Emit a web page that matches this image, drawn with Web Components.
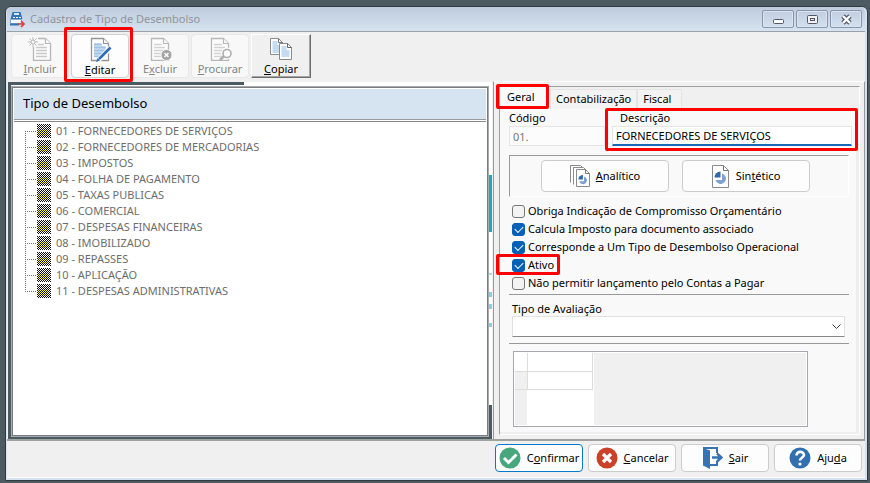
<!DOCTYPE html>
<html lang="pt-BR">
<head>
<meta charset="utf-8">
<title>Cadastro de Tipo de Desembolso</title>
<style>
html { height: 100%; }
body { margin: 0; min-height: 100%; box-sizing: border-box; padding: 6px 2px 4px 5px; display: flex; background: #4b5b61; font: 11px/16px "Noto Sans", "Open Sans", sans-serif; color: #000; }
</style>
</head>
<body>
<app-window></app-window>
<script>
const doc = (extra, fold = '#fff') => `<path d="M3.5 1.5h12l5 5v17h-17z" fill="#fff" stroke="#959595" stroke-width="1.3"/><path d="M15.5 1.5v5h5" fill="${fold}" stroke="#959595" stroke-width="1.2"/>${extra}`;
const lines = c => `<path d="M6 7.5h8M6 10.5h11M6 13.5h11M6 16.5h11M6 19.5h11" stroke="${c}" stroke-width="1.6"/>`;
const svg = (w, h, body, vb) => `<svg width="${w}" height="${h}" viewBox="${vb || `0 0 ${w} ${h}`}" fill="none" aria-hidden="true">${body}</svg>`;
const pie = `<path d="M10.500 6.500v6h-6a6 6 0 0 1 6-6z" fill="#2f69a8"/><path d="M12 8.500a5.300 5.300 0 1 1-6.500 6.500H12z" fill="#7ea1cf"/>`;
const ICONS = {
  app: svg(17, 17, `<path d="M3.500 1h8l2 7h-12z" fill="#3374b5"/><path d="M5 2h5v2H5z" fill="#d6e7f5"/><path d="M4 6h2v1H4zm3 0h2v1H7zm3 0h2v1h-2z" fill="#fff"/><path d="M1.500 8.500h11v4h-11z" fill="#f5fafc" stroke="#7ea9d0"/><path d="M1 13.500h9" stroke="#3374b5" stroke-width="2"/><path d="M9 13h6m-3-3 3 3-3 3" stroke="#d9443a" stroke-width="1.700"/>`),
  incluir: svg(24, 24, `<g transform="translate(2 0)">${doc(lines('#b0b0b0'))}</g><path d="M0 0h10v10H0z" fill="#f8f8f8"/><path d="M5 0v10M0 5h10M1.500 1.500l7 7M8.500 1.500l-7 7" stroke="#999"/><circle cx="5" cy="5" r="2" fill="#fff" stroke="#999"/>`),
  editar: svg(24, 25, `${doc('<path d="M6 6h7v3h5v11H6z" fill="#c7ddf3"/>' + lines('#9fc1e5'))}<path d="M9.500 24 23 10.500" stroke="#fff" stroke-width="5"/><path d="M11 22 22.500 10.500" stroke="#2e6db5" stroke-width="2.600"/><path d="m8 25 1.500-4 2.500 2.500z" fill="#2e6db5"/>`),
  excluir: svg(24, 24, `${doc(lines('#c0c0c0'))}<circle cx="18.500" cy="18" r="5.500" fill="#777" stroke="#f9f9f9"/><path d="m16.500 16 4 4m0-4-4 4" stroke="#fff" stroke-width="1.600"/>`),
  procurar: svg(24, 24, `${doc(lines('#c0c0c0'))}<circle cx="19" cy="16.500" r="4" fill="#fff" stroke="#f9f9f9" stroke-width="4"/><circle cx="19" cy="16.500" r="4" fill="#fff" stroke="#888" stroke-width="1.600"/><path d="m16 19-4 4" stroke="#888" stroke-width="2.500"/>`),
  copiar: svg(22, 24, `<path d="M.5 1.500h8l4 4v12H.5z" fill="#fff" stroke="#8b8b8b"/><path d="M2.500 4h5v4h3v8h-8z" fill="#c4dbf1"/><path d="M8.500 1.500v4h4" stroke="#777"/><path d="M9.500 6.500h8l4 4v12h-12z" fill="#fff" stroke="#8b8b8b"/><path d="M11.500 9h5v4h3v7h-8z" fill="#c4dbf1"/><path d="M17.500 6.500v4h4" stroke="#666"/>`),
  analitico: svg(20, 22, `<path d="M.5 17.500V.5h10l2 2M3.500 19.500v-17h10l2 2" fill="#fff" stroke="#8b8b8b"/><path d="M6.500 4.500h9l4 4v13h-13z" fill="#fff" stroke="#8b8b8b"/><path d="M15.500 4.500v4h4" stroke="#777"/><g transform="translate(5 5) scale(.75)">${pie}</g>`),
  sintetico: svg(18, 23, `<path d="M.5.5h11l5 5v17H.5z" fill="#fff" stroke="#8b8b8b"/><path d="M11.500.5v5h5" stroke="#777"/><g transform="translate(-2 0)">${pie}</g>`),
  confirmar: svg(22, 22, `<circle cx="11" cy="11" r="10.500" fill="#45a77b"/><path d="m5 11 4.500 4.500 8-8" stroke="#fff" stroke-width="3"/>`),
  cancelar: svg(22, 22, `<circle cx="11" cy="11" r="10.500" fill="#ca4028"/><path d="m7 7 8 8m0-8-8 8" stroke="#fff" stroke-width="3.200"/>`),
  sair: svg(21, 22, `<path d="M1 1h14v5M15 14v4H8" stroke="#3873b3" stroke-width="2"/><path d="m1 1 7 2.500V22l-7-3.500z" fill="#3873b3"/><path d="M10 10.500h9M15 6.500l4.500 4-4.500 4" stroke="#3873b3" stroke-width="2.400"/>`),
  ajuda: svg(22, 22, `<circle cx="11" cy="11" r="10.500" fill="#326fb0"/><path d="M7.500 8.500c0-5 7.500-4.500 7.500-.5 0 2.500-4 2.500-4 5.500" stroke="#fff" stroke-width="2.600"/><circle cx="11" cy="17" r="1.600" fill="#fff"/>`),
  min: svg(13, 13, `<rect x="1.500" y="6.500" width="10" height="4" rx="1" fill="#fff" stroke="#54576a"/>`),
  max: svg(13, 13, `<rect x="1.500" y="2.500" width="10" height="8" rx="1" fill="#f2f2f2" stroke="#54576a"/><rect x="4.500" y="5.500" width="4" height="2" fill="#dce6f1" stroke="#54576a"/>`),
  close: svg(13, 13, `<path d="m3 3 7 7m0-7-7 7" stroke="#54576a" stroke-width="4.600"/><path d="m3 3 7 7m0-7-7 7" stroke="#fff" stroke-width="2.400"/>`)
};
const define = (name, css, html) => customElements.define(name, class extends HTMLElement {
  constructor() {
    super();
    const markup = typeof html === 'function' ? html(this) : html;
    this.attachShadow({ mode: 'open' }).innerHTML = `<style>*{box-sizing:border-box}button,input,select{font:inherit;color:inherit;margin:0}svg{display:block;flex:none}${css}</style>${markup}`;
  }
});

/* Red outline drawn over the element that contains it */
define('focus-frame', `:host{position:absolute;inset:var(--frame,-6px);border:3px solid #f00;border-radius:2px;pointer-events:none;z-index:3}`, '');

define('title-bar', `
:host{display:flex;align-items:center;height:25px;padding:0 3px 0 2px;gap:4px;background:linear-gradient(#bdcbdc,#d6e3f0);border-bottom:1px solid #9aa0a8;border-radius:5px 5px 0 0}
h1{flex:1;margin:0;font-size:11px;line-height:18px;font-weight:400;color:#8f959c}
.c{display:flex;gap:2px}
button{display:flex;align-items:center;justify-content:center;width:32px;height:18px;padding:0;background:linear-gradient(#c0cee0,#d3e0ee);border:1px solid #8995a9;border-radius:2px;box-shadow:inset 0 0 0 1px #d9e4f0}`,
`${ICONS.app}<h1><slot></slot></h1><div class="c"><button aria-label="Minimizar">${ICONS.min}</button><button aria-label="Maximizar">${ICONS.max}</button><button aria-label="Fechar">${ICONS.close}</button></div>`);

define('tool-button', `
:host{display:block;position:relative;width:58px}
:host([classic]){width:60px}
button{display:flex;flex-direction:column;align-items:center;justify-content:space-between;width:100%;height:44px;padding:2px 0 0;background:#fdfdfd;border:1px solid #d0d0d0;border-radius:4px}
button:disabled{background:#f8f8f8;border-color:#e8e8e8;color:#848484}
button:disabled svg{opacity:.65}
:host([classic]) button{background:#f0f0f0;border:1px solid;border-color:#fff #6d6d6d #6d6d6d #fff;border-radius:0;box-shadow:inset -1px -1px #a5a5a5}`,
el => `<button ${el.hasAttribute('disabled') ? 'disabled' : ''}>${ICONS[el.getAttribute('icon')]}<span><slot></slot></span></button><slot name="frame"></slot>`);

define('tool-bar', `:host{display:flex;gap:2px;padding:2px 4px;height:49px;background:#f0f0f0}`, `<slot></slot>`);

define('tree-item', `
:host{display:flex;align-items:center;height:16px;color:#6d6d6d;
 background:repeating-linear-gradient(90deg,#777 0 1px,transparent 1px 2px) 0 8px/11px 1px no-repeat,repeating-linear-gradient(#777 0 1px,transparent 1px 2px) 0 0/1px 16px no-repeat}
:host(:first-of-type){background-position:0 8px,0 8px}
:host(:last-of-type){background-size:11px 1px,1px 8px}
i{width:14px;height:14px;margin:0 5px 0 12px;background:conic-gradient(transparent 25%,#111 0 50%,transparent 0 75%,#111 0) 0 0/2px 2px,linear-gradient(#ff0,#ff0) 1px 5px/10px 7px no-repeat,#fff}`,
`<i></i><slot></slot>`);

define('tree-panel', `
:host{display:flex;flex-direction:column;border:1px solid #777b82;box-shadow:0 0 0 1px #aaa;background:#fff;min-width:0}
h2{margin:1px 1px 3px;padding:5px 9px 7px;font-size:13px;line-height:18px;font-weight:400;background:#d6e4f2;box-shadow:0 1px #999,0 2px #fff,0 3px #888}
.l{padding:1px 12px}`,
`<h2>Tipo de Desembolso</h2><div class="l" role="tree"><slot></slot></div>`);

define('check-line', `
:host{display:block;position:relative;width:max-content}
label{display:flex;align-items:center;gap:3px;height:18px}
input{appearance:none;width:13px;height:13px;border:1px solid #777;border-radius:3px;background:#f3f3f3}
input:checked{border-color:#0561b8;background:#0561b8}
input:checked::after{content:"";display:block;width:7px;height:4px;margin:2px;border:solid #fff;border-width:0 0 1px 1px;transform:rotate(-45deg)}`,
el => `<label><input type="checkbox" ${el.hasAttribute('checked') ? 'checked' : ''}><slot></slot></label><slot name="frame"></slot>`);

define('icon-button', `
:host{display:block;width:var(--w,88px)}
button{display:flex;align-items:center;justify-content:center;gap:var(--gap,6px);width:100%;height:var(--h,28px);padding:0 3px;background:#fdfdfd;border:1px solid #ccc;border-radius:4px}
:host([primary]) button{border-color:#0878ce}`,
el => `<button>${ICONS[el.getAttribute('icon')]}<span><slot></slot></span></button>`);

define('detail-form', `
:host{display:flex;flex-direction:column;margin:4px 4px 4px 5px;border:1px solid #a0a0a0;border-right-color:#fff;border-bottom-color:#fff;background:#f9f9f9;box-shadow:inset -3px -2px #eee}
nav{display:flex;align-items:flex-end;height:22px;background:linear-gradient(#f0f0f0,#f0f0f0) 50px 0/100% 100% no-repeat}
nav button{position:relative;height:20px;padding:0 10px 2px 5px;border:1px solid #e4e4e4;border-bottom:0;background:#f3f3f3;white-space:nowrap}
nav .wide{padding-right:5px}
nav button.on{height:22px;width:48px;margin-right:2px;padding:0 7px 3px;background:#f9f9f9;border:0;text-align:left}
.body{padding:1px 10px 7px 9px}
.fields{display:grid;grid-template-columns:96px 1fr;column-gap:7px;margin-right:-3px}
.f{position:relative}
label{display:block;line-height:15px}
.f+.f label{padding-left:8px}
.f input{display:block;width:100%;height:20px;padding:0 3px;margin-top:1px;border:1px solid #e5e5e5;background:#fff;outline:0}
.f input:disabled{background:#fcfcfc;color:#777}
.f .edit{border-bottom:2px solid #1769b8}
.kind{display:flex;gap:13px;margin:9px 0 5px;padding:4px 8px 4px 31px;height:42px;border:1px solid #999;border-right-color:#fff;border-bottom-color:#fff;--w:128px;--h:32px}
.checks{padding:0 0 0 3px}
.rate{margin-top:2px;padding:6px 4px 6px 3px;border:solid #999;border-width:1px 0}
select{appearance:none;display:block;width:100%;height:21px;border:1px solid #e2e2e2;border-bottom-color:#888;border-radius:1px;background:#fff}
.s{position:relative}
.s svg{position:absolute;right:4px;top:8px;pointer-events:none}
.grid{display:flex;width:295px;height:76px;margin:7px 0 0 4px;padding:1px;border:1px solid #a5a8ad;background:#fff;max-width:100%}
table{border-collapse:collapse;height:36px}
td,th{height:18px;padding:0;border:1px solid #ddd;border-width:0 1px 1px 0}
td:first-child,th:first-child{width:13px}
td:last-child,th:last-child{width:65px}
tbody td:first-child{background:#f0f0f0}
.t{width:78px;margin-right:1px;background:linear-gradient(#f0f0f0,#f0f0f0) 0 36px/12px 100% no-repeat}
.rest{flex:1;background:#f0f0f0}`,
`<nav role="tablist"><button class="on" role="tab" aria-selected="true">Geral<focus-frame style="--frame:-3px -1px 0 -4px"></focus-frame></button><button class="wide" role="tab">Contabilização</button><button role="tab">Fiscal</button></nav>
<div class="body"><div class="fields"><div class="f"><label for="cod">Código</label><input id="cod" value="01." disabled></div><div class="f"><label for="desc">Descrição</label><input id="desc" class="edit" value="FORNECEDORES DE SERVIÇOS"><focus-frame style="--frame:-2px -6px -5px -7px"></focus-frame></div></div>
<div class="kind"><icon-button icon="analitico"><u>A</u>nalítico</icon-button><icon-button icon="sintetico">Sin<u>t</u>ético</icon-button></div>
<div class="checks"><check-line>Obriga Indicação de Compromisso Orçamentário</check-line><check-line checked>Calcula Imposto para documento associado</check-line><check-line checked>Corresponde a Um Tipo de Desembolso Operacional</check-line><check-line checked>Ativo<focus-frame slot="frame" style="--frame:-2px -6px -1px -16px"></focus-frame></check-line><check-line>Não permitir lançamento pelo Contas a Pagar</check-line></div>
<div class="rate"><label for="rate">Tipo de Avaliação</label><div class="s"><select id="rate"><option></option></select>${svg(9, 6, '<path d="m.5.5 4 4 4-4" stroke="#444"/>')}</div></div>
<div class="grid"><div class="t"><table aria-label="Avaliação"><thead><tr><th></th><th></th></tr></thead><tbody><tr><td></td><td></td></tr></tbody></table></div><div class="rest"></div></div></div>`);

const items = ['01 - FORNECEDORES DE SERVIÇOS', '02 - FORNECEDORES DE MERCADORIAS', '03 - IMPOSTOS', '04 - FOLHA DE PAGAMENTO', '05 - TAXAS PUBLICAS', '06 - COMERCIAL', '07 - DESPESAS FINANCEIRAS', '08 - IMOBILIZADO', '09 - REPASSES', '10 - APLICAÇÃO', '11 - DESPESAS ADMINISTRATIVAS'];

define('app-window', `
:host{flex:1;min-width:0;display:flex;flex-direction:column;border:1px solid #35383d;border-radius:6px 6px 0 0;background:#d6e2f0;padding:0 2px 2px 1px}
main{flex:1;display:grid;grid-template-columns:minmax(0,1fr) 372px;border-bottom:2px solid #9fa3a0;background:#f0f0f0}
.left{display:grid;margin:1px 1px 0 1px;padding:5px 4px 3px 4px;
 background:
 linear-gradient(#4b5b61,#4b5b61) 0 0/236px 3px no-repeat,
 linear-gradient(#4b5b61,#4b5b61) 0 0/3px 100% no-repeat,
 linear-gradient(#4b5b61,#4b5b61) 0 100%/100% 2px no-repeat,
 linear-gradient(#4b5b61,#4b5b61) 100% 100%/3px 34px no-repeat,
 linear-gradient(#19a9c0,#19a9c0) 100% 93px/3px 57px no-repeat,
 linear-gradient(#a5dce5,#a5dce5) 100% 191px/3px 2px no-repeat,
 linear-gradient(#8acfda,#8acfda) 100% 210px/3px 5px no-repeat,
 linear-gradient(#8acfda,#8acfda) 100% 222px/3px 5px no-repeat,
 linear-gradient(#8acfda,#8acfda) 100% 241px/3px 4px no-repeat,#fff}
.right{display:grid;border-left:1px solid #999;border-right:1px solid #999;border-top:1px solid #fff}
footer{display:flex;justify-content:flex-end;gap:5px;padding:3px 3px 5px;background:#f0f0f0;border-bottom:1px solid #fff}`,
`<title-bar>Cadastro de Tipo de Desembolso</title-bar>
<tool-bar><tool-button icon="incluir" disabled><u>I</u>ncluir</tool-button><tool-button icon="editar"><u>E</u>ditar<focus-frame slot="frame" style="--frame:-7px -4px -3px -7px"></focus-frame></tool-button><tool-button icon="excluir" disabled>E<u>x</u>cluir</tool-button><tool-button icon="procurar" disabled><u>P</u>rocurar</tool-button><tool-button icon="copiar" classic><u>C</u>opiar</tool-button></tool-bar>
<main><div class="left"><tree-panel>${items.map(t => `<tree-item role="treeitem">${t}</tree-item>`).join('')}</tree-panel></div><div class="right"><detail-form></detail-form></div></main>
<footer><icon-button icon="confirmar" primary>C<u>o</u>nfirmar</icon-button><icon-button icon="cancelar"><u>C</u>ancelar</icon-button><icon-button icon="sair"><u>S</u>air</icon-button><icon-button icon="ajuda">Aju<u>d</u>a</icon-button></footer>`);
</script>
</body>
</html>
